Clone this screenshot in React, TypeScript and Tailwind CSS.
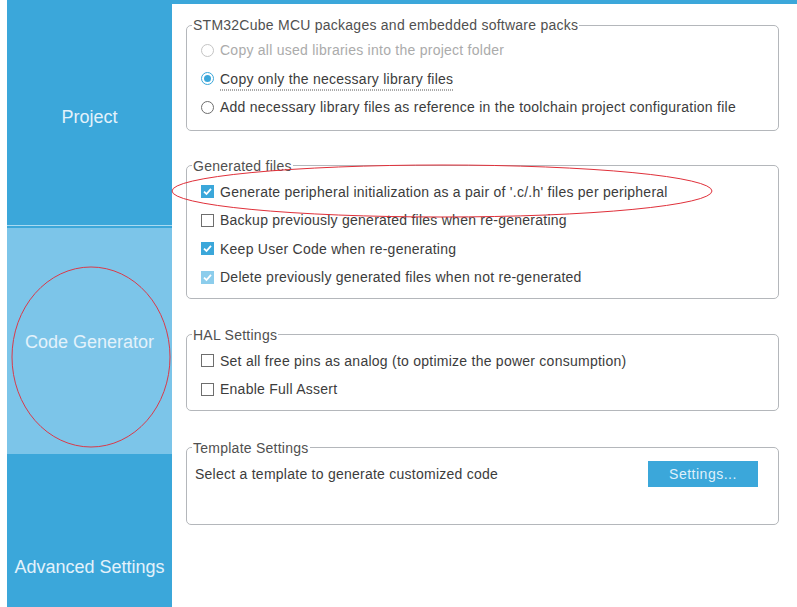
import React from "react";

function Radio({ state }: { state: "off" | "on" | "disabled" }) {
  if (state === "on")
    return (
      <span className="flex h-[13px] w-[13px] shrink-0 items-center justify-center rounded-full border border-[#3ba7da] bg-white">
        <span className="h-[7px] w-[7px] rounded-full bg-[#3ba7da]" />
      </span>
    );
  return (
    <span
      className={
        state === "disabled"
          ? "h-[13px] w-[13px] shrink-0 rounded-full border border-[#c4c4c4] bg-white"
          : "h-[13px] w-[13px] shrink-0 rounded-full border border-[#6e6e6e] bg-white"
      }
    />
  );
}

function Check({ state }: { state: "off" | "on" | "disabled" }) {
  if (state === "off")
    return <span className="h-[13px] w-[13px] shrink-0 border border-[#6e6e6e] bg-white" />;
  return (
    <span
      className={
        state === "on"
          ? "flex h-[13px] w-[13px] shrink-0 items-center justify-center bg-[#3ba7da]"
          : "flex h-[13px] w-[13px] shrink-0 items-center justify-center bg-[#8ccdec]"
      }
    >
      <svg width="11" height="11" viewBox="0 0 11 11">
        <path d="M2 5.6 L4.5 8 L9 2.8" fill="none" stroke="white" strokeWidth="1.8" />
      </svg>
    </span>
  );
}

function Row({ control, children, muted }: { control: React.ReactNode; children: React.ReactNode; muted?: boolean }) {
  return (
    <div className="flex h-[28.5px] items-center gap-[6px] pl-[14px]">
      {control}
      <span className={muted ? "text-[#ababab]" : "text-[#3c3c3c]"}>{children}</span>
    </div>
  );
}

function Group({ title, children, className }: { title: string; children: React.ReactNode; className?: string }) {
  return (
    <fieldset className={"m-0 rounded-[5px] border border-[#b4b7bb] p-0 " + (className ?? "")}>
      <legend className="ml-[5px] px-[1px] text-[14px] leading-4 text-[#505050]">{title}</legend>
      {children}
    </fieldset>
  );
}

export default function App() {
  return (
    <div
      className="relative h-[607px] w-[797px] overflow-hidden bg-white text-[14px]"
      style={{ fontFamily: "'Liberation Sans', Arial, sans-serif" }}
    >
      <div className="ml-[7px] h-[4px] bg-[#3ba7da]" />
      <div className="flex">
        <div className="ml-[7px] flex w-[165px] shrink-0 flex-col text-[18px] text-[#e3f2fb]">
          <div className="flex h-[221px] items-center justify-center bg-[#3ba7da] pt-[5px]">Project</div>
          <div className="h-[1px] bg-[#a9daf1]" />
          <div className="h-[2px] bg-[#3ba7da]" />
          <div className="flex h-[226px] items-center justify-center bg-[#7cc5e9] pt-[3px]">Code Generator</div>
          <div className="flex h-[226px] items-center justify-center bg-[#3ba7da]">Advanced Settings</div>
        </div>
        <div className="flex flex-1 flex-col pl-[14px] pr-[18px] pt-[13px] leading-4 tracking-[0.25px]">
          <Group title="STM32Cube MCU packages and embedded software packs" className="pt-[3px] pb-[8px]">
            <Row control={<Radio state="disabled" />} muted>
              Copy all used libraries into the project folder
            </Row>
            <Row control={<Radio state="on" />}>
              <span className="inline-block border-b border-dotted border-[#555] pb-[3px] translate-y-[1.5px]">
                Copy only the necessary library files
              </span>
            </Row>
            <Row control={<Radio state="off" />}>
              Add necessary library files as reference in the toolchain project configuration file
            </Row>
          </Group>
          <Group title="Generated files" className="mt-[27px] pt-1 pb-[6px]">
            <Row control={<Check state="on" />}>
              Generate peripheral initialization as a pair of '.c/.h' files per peripheral
            </Row>
            <Row control={<Check state="off" />}>Backup previously generated files when re-generating</Row>
            <Row control={<Check state="on" />}>Keep User Code when re-generating</Row>
            <Row control={<Check state="disabled" />}>Delete previously generated files when not re-generated</Row>
          </Group>
          <Group title="HAL Settings" className="mt-[28px] pt-1 pb-[6px]">
            <Row control={<Check state="off" />}>
              Set all free pins as analog (to optimize the power consumption)
            </Row>
            <Row control={<Check state="off" />}>Enable Full Assert</Row>
          </Group>
          <Group title="Template Settings" className="mt-[29px] pb-[37px] pt-[5px]">
            <div className="flex h-[26px] items-center justify-between pl-[8px] pr-[20px]">
              <span className="text-[#3c3c3c]">Select a template to generate customized code</span>
              <button className="flex h-[26px] w-[110px] items-center justify-center bg-[#3ba7da] tracking-[0.5px] text-[#dff0fa]">
                Settings...
              </button>
            </div>
          </Group>
        </div>
      </div>
      <svg className="pointer-events-none absolute left-0 top-0" width="797" height="607">
        <ellipse cx="442" cy="191" rx="270" ry="26" fill="none" stroke="#e0303a" strokeWidth="1" />
        <ellipse cx="91" cy="357" rx="79" ry="90" fill="none" stroke="#d93a4a" strokeWidth="1" />
      </svg>
    </div>
  );
}
